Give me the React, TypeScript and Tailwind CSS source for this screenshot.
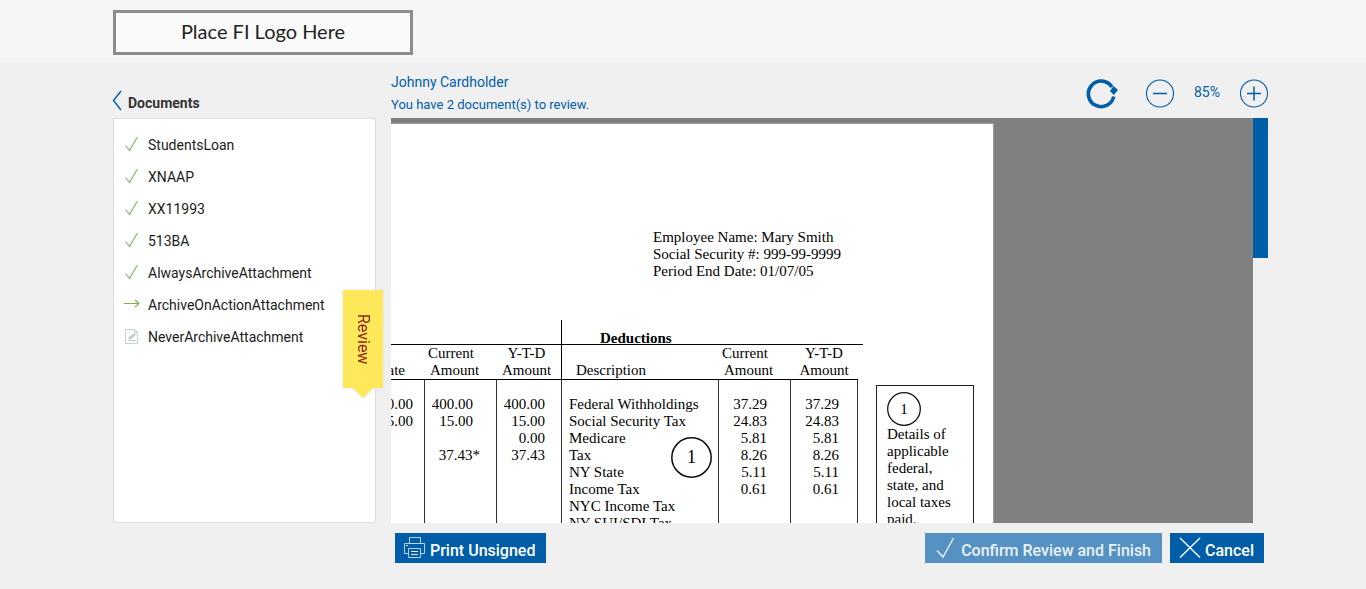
import type { ReactNode } from 'react';

type Status = 'done' | 'current' | 'pending';

const documents: { name: string; status: Status }[] = [
  { name: 'StudentsLoan', status: 'done' },
  { name: 'XNAAP', status: 'done' },
  { name: 'XX11993', status: 'done' },
  { name: '513BA', status: 'done' },
  { name: 'AlwaysArchiveAttachment', status: 'done' },
  { name: 'ArchiveOnActionAttachment', status: 'current' },
  { name: 'NeverArchiveAttachment', status: 'pending' },
];

const stubRows = [
  ['10.00', '400.00', '400.00', 'Federal Withholdings', '37.29', '37.29'],
  ['15.00', '15.00', '15.00', 'Social Security Tax', '24.83', '24.83'],
  ['', '', '0.00', 'Medicare', '5.81', '5.81'],
  ['', '37.43*', '37.43', 'Tax', '8.26', '8.26'],
  ['', '', '', 'NY State', '5.11', '5.11'],
  ['', '', '', 'Income Tax', '0.61', '0.61'],
  ['', '', '', 'NYC Income Tax', '', ''],
  ['', '', '', 'NY SUI/SDI Tax', '', ''],
];

function StatusIcon({ status }: { status: Status }) {
  if (status === 'done') {
    return (
      <svg width="16" height="16" viewBox="0 0 16 16" fill="none" stroke="#83b36a" strokeWidth="1.1" aria-hidden="true">
        <path d="M1.5 8.5 L5.5 13.5 L13.5 0" />
      </svg>
    );
  }
  if (status === 'current') {
    return (
      <svg width="16" height="16" viewBox="0 0 16 16" fill="none" stroke="#7fae55" strokeWidth="1.1" aria-hidden="true">
        <path d="M0 6.5 H15 M11 3 L15 6.5 L11 10" />
      </svg>
    );
  }
  return (
    <svg width="16" height="16" viewBox="0 0 16 16" fill="none" stroke="#c3d3d3" aria-hidden="true">
      <path d="M1.5 0.5 H10.5 L13.5 3.5 V14.5 H1.5 Z M10.5 0.5 V3.5 H13.5" />
      <path d="M3.5 11.5 H12" />
      <path d="M5 9.5 L6 8 L10.5 4.5 M5 9.5 L7 9 L11.5 5.5" stroke="#9fb0ae" />
    </svg>
  );
}

function Circled({ children }: { children: ReactNode }) {
  return (
    <span className="relative flex h-full w-full items-center justify-center">
      <svg viewBox="0 0 40 40" fill="none" stroke="#111" strokeWidth="1.5" className="absolute inset-0 h-full w-full" aria-hidden="true">
        <circle cx="20" cy="20" r="19.2" />
      </svg>
      {children}
    </span>
  );
}

function PayStub() {
  const line = 'border-l border-[#333]';
  return (
    <div className="h-full w-[602px] bg-white pt-[105px] font-['Liberation_Serif',serif] text-[15px] leading-[17px] text-black shadow-[0_0_1px_1px_#999]">
      <div className="ml-[262px]">
        <p>Employee Name: Mary Smith</p>
        <p>Social Security #: 999-99-9999</p>
        <p>Period End Date: 01/07/05</p>
      </div>
      <div className="mt-[40px] flex items-start">
        <div className="-ml-[47px] w-[519px] shrink-0">
          <div className="flex h-[25px] items-end border-b border-black pl-[217px]">
            <p className="h-full border-l border-black pt-[11px] pl-[38px] leading-[14px] font-bold">Deductions</p>
          </div>
          <table className="w-[514px] table-fixed border-separate border-spacing-0">
            <colgroup>
              <col className="w-[80px]" />
              <col className="w-[72px]" />
              <col className="w-[65px]" />
              <col className="w-[157px]" />
              <col className="w-[72px]" />
              <col className="w-[68px]" />
            </colgroup>
            <thead>
              <tr className="h-[35px] align-bottom">
                <th className="border-b border-black pr-[19px] text-right font-normal">Rate</th>
                <th className="border-b border-black pl-[4px] text-left font-normal">
                  Current<br /><span className="pl-[2px]">Amount</span>
                </th>
                <th className="border-b border-black pr-[4px] font-normal">Y-T-D<br />Amount</th>
                <th className="border-b border-l border-black pl-[14px] text-left font-normal">Description</th>
                <th className="border-b border-black pl-[4px] text-left font-normal">
                  Current<br /><span className="pl-[2px]">Amount</span>
                </th>
                <th className="border-b border-black font-normal">Y-T-D<br />Amount</th>
              </tr>
            </thead>
            <tbody>
              <tr className="h-[16px]">
                <td></td>
                <td className={line}></td>
                <td className={line}></td>
                <td className={line}></td>
                <td className={line}></td>
                <td className="border-x border-[#333]"></td>
              </tr>
              {stubRows.map((row) => (
                <tr key={row[3]} className="h-[17px]">
                  <td className="pr-[11px] text-right">{row[0]}</td>
                  <td className={row[1].endsWith('*') ? 'border-l border-[#333] pr-[16px] text-right' : 'border-l border-[#333] pr-[23px] text-right'}>
                    {row[1]}
                  </td>
                  <td className="border-l border-[#333] pr-[16px] text-right">{row[2]}</td>
                  <td className="relative border-l border-[#333] pl-[7px] whitespace-nowrap">
                    {row[3]}
                    {row[3] === 'Medicare' && (
                      <span className="absolute top-[7px] left-[109px] h-[41px] w-[41px] text-[18px]">
                        <Circled>1</Circled>
                      </span>
                    )}
                  </td>
                  <td className="border-l border-[#333] pr-[23px] text-right">{row[4]}</td>
                  <td className="border-x border-[#333] pr-[18px] text-right">{row[5]}</td>
                </tr>
              ))}
            </tbody>
          </table>
        </div>
        <div className="mt-[65px] ml-[13px] h-[160px] w-[98px] shrink-0 border border-[#222] px-[10px] pt-[6px]">
          <div className="h-[34px] w-[34px]">
            <Circled>1</Circled>
          </div>
          <p>
            Details of applicable federal,
            <br />
            state, and local taxes paid.
          </p>
        </div>
      </div>
    </div>
  );
}

export default function App() {
  return (
    <div className="min-h-screen bg-[#f0f0f0] font-[Roboto,sans-serif] text-[14px] text-[#1c1c1c]">
      <header className="bg-[#f5f5f5] pt-[10px] pb-[7px]">
        <div className="mx-auto max-w-[1170px] pl-[15px]">
          <div className="flex h-[45px] w-[300px] items-center justify-center border-[3px] border-[#8c8c8c] bg-[#fafafa] pb-[4px] font-[Lato,sans-serif] text-[20px] text-[#222]">
            Place FI Logo Here
          </div>
        </div>
      </header>

      <main className="mx-auto flex max-w-[1170px] gap-[15px] pl-[15px]">
        <aside className="relative flex w-[263px] shrink-0 flex-col">
          <div className="flex h-[56px] items-end pb-[6px]">
            <button type="button" aria-label="Back" className="h-[22px] w-[15px]">
              <svg width="12" height="22" viewBox="0 0 12 22" fill="none" stroke="#0a67b2" strokeWidth="1.6" className="-ml-px" aria-hidden="true">
                <path d="M9 1 L1.5 10.5 L9 20" />
              </svg>
            </button>
            <h2 className="leading-[18px] font-bold text-[#333]">Documents</h2>
          </div>
          <ul className="h-[405px] border border-[#ddd] bg-white pt-[10px]">
            {documents.map((doc) => (
              <li key={doc.name}>
                <a href="#" className="flex h-[32px] items-center gap-[8px] pl-[10px]">
                  <StatusIcon status={doc.status} />
                  {doc.name}
                </a>
              </li>
            ))}
          </ul>
          <div className="absolute top-[228px] -right-[7px] drop-shadow-[0_0_1px_#ddd]">
            <div className="flex h-[98px] w-[40px] items-center justify-center bg-[#ffe95a] text-[16px] text-[#8a1f11] [writing-mode:vertical-rl]">
              Review
            </div>
            <svg width="40" height="10" viewBox="0 0 40 10" fill="#ffe95a" className="block" aria-hidden="true">
              <path d="M10 0 H30 L20 10 Z" />
            </svg>
          </div>
        </aside>

        <section className="min-w-0 flex-1">
          <div className="flex h-[56px] justify-between text-[#005ea8]">
            <div className="pt-[10px]">
              <p className="leading-[20px]">Johnny Cardholder</p>
              <p className="mt-[3px] text-[13px] leading-[20px]">You have 2 document(s) to review.</p>
            </div>
            <div className="flex items-start pt-[16px]">
              <button type="button" aria-label="Rotate">
                <svg width="34" height="32" viewBox="0 0 34 32" fill="none" stroke="#005ea8" strokeWidth="3.6" aria-hidden="true">
                  <path d="M28.7 18.5 A12.8 12.8 0 1 1 27 9" />
                  <path d="M33 12 L28.8 17 L25 13 L28.5 8 Z" fill="#005ea8" stroke="none" />
                </svg>
              </button>
              <button type="button" aria-label="Zoom out" className="ml-[26px]">
                <svg width="30" height="30" viewBox="0 0 30 30" fill="none" stroke="#005ea8" aria-hidden="true">
                  <circle cx="15" cy="15.5" r="13.5" strokeWidth="1.1" />
                  <path d="M8 15.5 H22" strokeWidth="1.5" />
                </svg>
              </button>
              <span className="w-[64px] pt-[4px] text-center text-[14px] leading-[20px]">85%</span>
              <button type="button" aria-label="Zoom in" className="-mr-px">
                <svg width="30" height="30" viewBox="0 0 30 30" fill="none" stroke="#005ea8" aria-hidden="true">
                  <circle cx="15" cy="15.5" r="13.5" strokeWidth="1.1" />
                  <path d="M8 15.5 H22 M15 8.5 V22.5" strokeWidth="1.5" />
                </svg>
              </button>
            </div>
          </div>

          <div className="flex h-[405px]">
            <div className="min-w-0 flex-1 overflow-hidden bg-[#808080] pt-[6px]">
              <PayStub />
            </div>
            <div className="w-[15px] shrink-0">
              <div className="h-[140px] bg-[#005ea8]"></div>
            </div>
          </div>

          <div className="flex gap-[8px] px-[4px] pt-[10px] text-[16px] font-medium text-white">
            <button type="button" className="mr-auto flex h-[30px] items-center gap-[4px] bg-[#005ea8] pr-[11px] pl-[9px]">
              <svg width="22" height="22" viewBox="0 0 22 22" fill="none" stroke="#b9d2e6" aria-hidden="true">
                <path d="M5.5 6 V0.5 H16.5 V6 M4 16.5 H0.5 V6.5 H20.5 V16.5 H17 M4.5 11.5 H16.5 V20.5 H4.5 Z" />
                <path d="M7 14.5 H14 M7 17.5 H14 M2 8.5 H4" stroke="#e4eef6" strokeWidth="1.2" />
              </svg>
              <span className="pt-[5px]">Print Unsigned</span>
            </button>
            <button type="button" className="flex h-[30px] items-center gap-[4px] bg-[#5591c2] pr-[11px] pl-[10px] text-[#eaf2f8]">
              <svg width="22" height="22" viewBox="0 0 22 22" fill="none" stroke="#eaf2f8" strokeWidth="1.4" aria-hidden="true">
                <path d="M2 13.5 L8 20 L18.5 1" />
              </svg>
              <span className="pt-[5px]">Confirm Review and Finish</span>
            </button>
            <button type="button" className="flex h-[30px] items-center gap-[4px] bg-[#005ea8] pr-[10px] pl-[9px]">
              <svg width="22" height="22" viewBox="0 0 22 22" fill="none" stroke="#fff" strokeWidth="1.4" aria-hidden="true">
                <path d="M1 1 L21 20.5 M21 1 L1 20.5" />
              </svg>
              <span className="pt-[5px]">Cancel</span>
            </button>
          </div>
        </section>
      </main>
    </div>
  );
}
